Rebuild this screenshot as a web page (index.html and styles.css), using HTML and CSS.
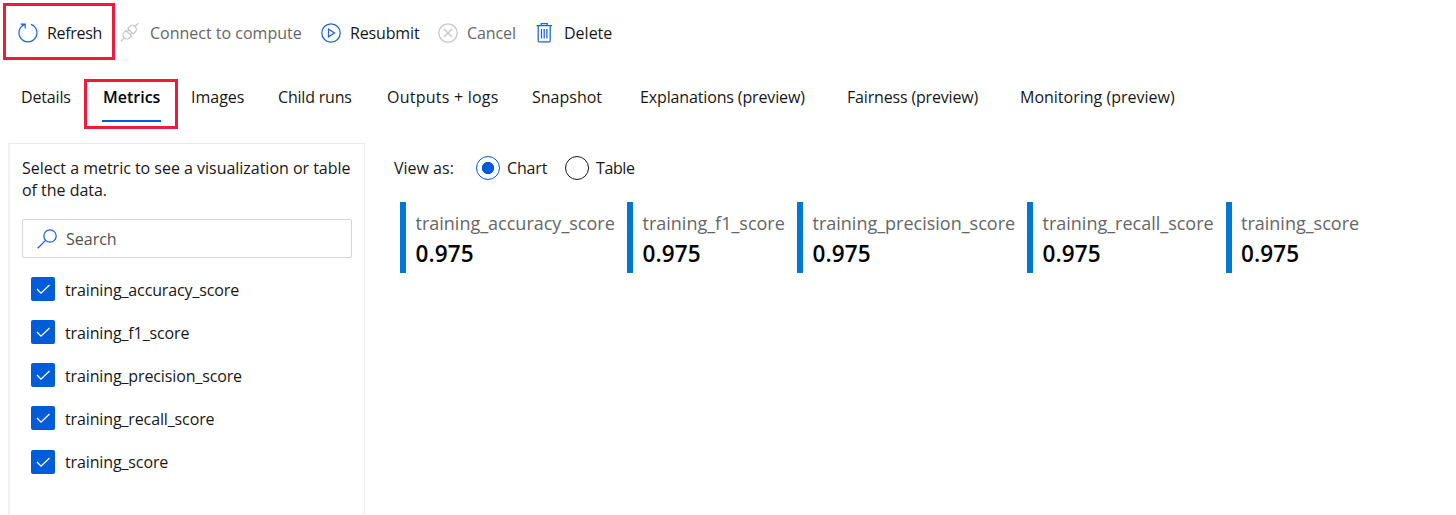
FILE: index.html
```html
<!DOCTYPE html>
<html lang="en">
<head>
<meta charset="utf-8">
<title>Run metrics</title>
<link rel="stylesheet" href="styles.css">
</head>
<body>
<header class="toolbar">
  <div class="command highlight highlight-refresh"><svg class="icon" viewBox="0 0 20 20"><path d="M2.6 1h4.6v4.4M6.9 1.3A9 9 0 1 0 13 1.3"/></svg><span class="t-refresh">Refresh</span></div>
  <div class="command disabled"><svg class="icon" viewBox="0 0 20 20"><g transform="translate(8.6 9.2) rotate(-46)"><path d="M-12.5 0H-8M8 0h4.5M-1.4-3.9H-4a3.9 3.9 0 0 0 0 7.8h2.6zM1.4-3.9H4a3.9 3.9 0 0 1 0 7.8H1.4zM-1.4-2h2.8M-1.4 2h2.8"/></g></svg><span class="t-connect">Connect to compute</span></div>
  <div class="command"><svg class="icon" viewBox="0 0 20 20"><circle cx="10" cy="10" r="9.2"/><path d="M7.5 6.2v7.6l6-3.8z"/></svg><span class="t-resubmit">Resubmit</span></div>
  <div class="command disabled"><svg class="icon" viewBox="0 0 20 20"><circle cx="10" cy="10" r="9.2"/><path d="m6 6 8 8m0-8-8 8"/></svg><span class="t-cancel">Cancel</span></div>
  <div class="command"><svg class="icon" viewBox="0 0 20 20"><path d="M1.5 2.7h15.5M6.2 2.5V.6h6v1.9M3.2 2.7v15.1q0 1 1 1h10q1 0 1-1V2.7M6.5 6v9.5M9.2 6v9.5M11.9 6v9.5"/></svg><span class="t-delete">Delete</span></div>
</header>
<nav class="tabs">
  <a class="t-details">Details</a>
  <a class="active highlight highlight-tab"><span class="t-metrics">Metrics</span></a>
  <a class="t-images">Images</a>
  <a class="t-child">Child runs</a>
  <a class="t-outputs">Outputs + logs</a>
  <a class="t-snapshot">Snapshot</a>
  <a class="t-explain">Explanations (preview)</a>
  <a class="t-fair">Fairness (preview)</a>
  <a class="t-monitor">Monitoring (preview)</a>
</nav>
<main class="content">
  <aside class="panel">
    <p class="intro">Select a metric to see a visualization or table<br>of the data.</p>
    <div class="search"><svg class="search-icon" viewBox="0 0 20 20"><circle cx="13" cy="7" r="6.2"/><path d="M8.6 11.4.7 19.3"/></svg><span>Search</span></div>
    <ul class="metrics">
      <li><svg class="check" viewBox="0 0 24 24"><path d="m6 12 4 4.2L18.5 8"/></svg><span>training_accuracy_score</span></li>
      <li><svg class="check" viewBox="0 0 24 24"><path d="m6 12 4 4.2L18.5 8"/></svg><span>training_f1_score</span></li>
      <li><svg class="check" viewBox="0 0 24 24"><path d="m6 12 4 4.2L18.5 8"/></svg><span>training_precision_score</span></li>
      <li><svg class="check" viewBox="0 0 24 24"><path d="m6 12 4 4.2L18.5 8"/></svg><span>training_recall_score</span></li>
      <li><svg class="check" viewBox="0 0 24 24"><path d="m6 12 4 4.2L18.5 8"/></svg><span>training_score</span></li>
    </ul>
  </aside>
  <section class="view">
    <div class="view-as">
      <span class="view-label">View as:</span>
      <span class="option"><i class="radio selected"></i>Chart</span>
      <span class="option"><i class="radio"></i>Table</span>
    </div>
    <div class="cards">
      <div class="card"><span class="name">training_accuracy_score</span><strong>0.975</strong></div>
      <div class="card"><span class="name">training_f1_score</span><strong>0.975</strong></div>
      <div class="card"><span class="name">training_precision_score</span><strong>0.975</strong></div>
      <div class="card"><span class="name">training_recall_score</span><strong>0.975</strong></div>
      <div class="card"><span class="name">training_score</span><strong>0.975</strong></div>
    </div>
  </section>
</main>
</body>
</html>
```
FILE: styles.css
```css
*, *::before, *::after { box-sizing: border-box; }
body {
  margin: 0;
  height: 515px;
  overflow: hidden;
  display: flex;
  flex-direction: column;
  background: #fff;
  color: #171717;
  font: 16px/22px "Open Sans", "Noto Sans", sans-serif;
  white-space: nowrap;
}
svg { fill: none; stroke: #1f61dc; stroke-width: 1.25; flex: none; }
.toolbar {
  height: 66px;
  padding-left: 18px;
  display: grid;
  grid-template-columns: 103px 200px 117px 97px 100px;
  align-items: center;
}
.command { display: flex; align-items: center; gap: 9px; height: 22px; }
.icon { width: 20px; height: 20px; overflow: visible; }
.disabled { color: #666; }
.disabled svg { stroke: #c6c6c6; }
.t-refresh { letter-spacing: -0.3px; }
.t-resubmit { letter-spacing: -0.15px; }
.t-cancel { letter-spacing: -0.1px; }
.highlight { position: relative; }
.highlight::before { content: ""; position: absolute; border: 3px solid #f01a3a; }
.highlight-refresh::before { left: -15px; top: -19px; width: 112px; height: 57px; }
.tabs {
  height: 77px;
  padding: 20px 0 0 21px;
  display: grid;
  grid-template-columns: 82px 88px 87px 109px 145px 108px 207px 173px 160px;
  align-items: start;
}
.tabs a { height: 37px; }
.t-details { letter-spacing: -0.15px; }
.t-child { letter-spacing: -0.2px; }
.t-outputs { letter-spacing: 0.23px; }
.t-explain { letter-spacing: -0.14px; }
.t-fair { letter-spacing: -0.17px; }
.active { font-weight: 600; color: #000; }
.active::after { content: ""; position: absolute; left: -1px; top: 34px; width: 59px; height: 2px; background: #015cda; }
.highlight-tab::before { left: -19px; top: -7px; width: 94px; height: 50px; }
.content { flex: 1; display: flex; min-height: 0; }
.panel {
  width: 357px;
  margin-left: 8px;
  padding: 13px 12px 0 13px;
  border: 1px solid #eaeaea;
  border-left: 2px solid #f1f1f1;
  border-bottom: 0;
}
.intro { margin: 0 0 18px -1px; letter-spacing: -0.02px; }
.search {
  width: 330px;
  height: 39px;
  margin-left: -1px;
  display: flex;
  align-items: center;
  gap: 9px;
  padding-left: 14px;
  border: 1.5px solid #d4d4d4;
  border-radius: 2px;
  color: #505050;
}
.search-icon { width: 20px; height: 20px; }
.metrics { margin: 9.6px 0 0; padding: 0 0 0 8px; list-style: none; letter-spacing: -0.13px; }
.metrics li { height: 43.1px; display: flex; align-items: center; gap: 10px; }
.metrics span { padding-top: 1px; }
.check { width: 24px; height: 24px; border-radius: 2px; background: #015cda; stroke: #fff; }
.view { padding: 13px 0 0 29px; }
.view-as { height: 24px; display: flex; align-items: center; letter-spacing: -0.15px; }
.view-label { width: 82px; letter-spacing: 0; }
.option { display: flex; align-items: center; gap: 7px; width: 89px; }
.option + .option { letter-spacing: -0.4px; }
.radio { width: 24px; height: 24px; border: 1.3px solid #171717; border-radius: 50%; }
.selected { border-color: #015cda; background: radial-gradient(circle, #015cda 5.8px, #fff 6.5px); }
.cards {
  margin: 22px 0 0 6px;
  display: grid;
  grid-template-columns: 227px 170px 230px 198.5px 150px;
}
.card {
  height: 71px;
  display: flex;
  flex-direction: column;
  padding: 9px 0 0 9.5px;
  border-left: 6px solid #0078d6;
}
.name { font-size: 18px; line-height: 24px; color: #666; }
.card strong { font-size: 22.5px; line-height: 38px; font-weight: 600; color: #000; letter-spacing: 0.1px; }
```
